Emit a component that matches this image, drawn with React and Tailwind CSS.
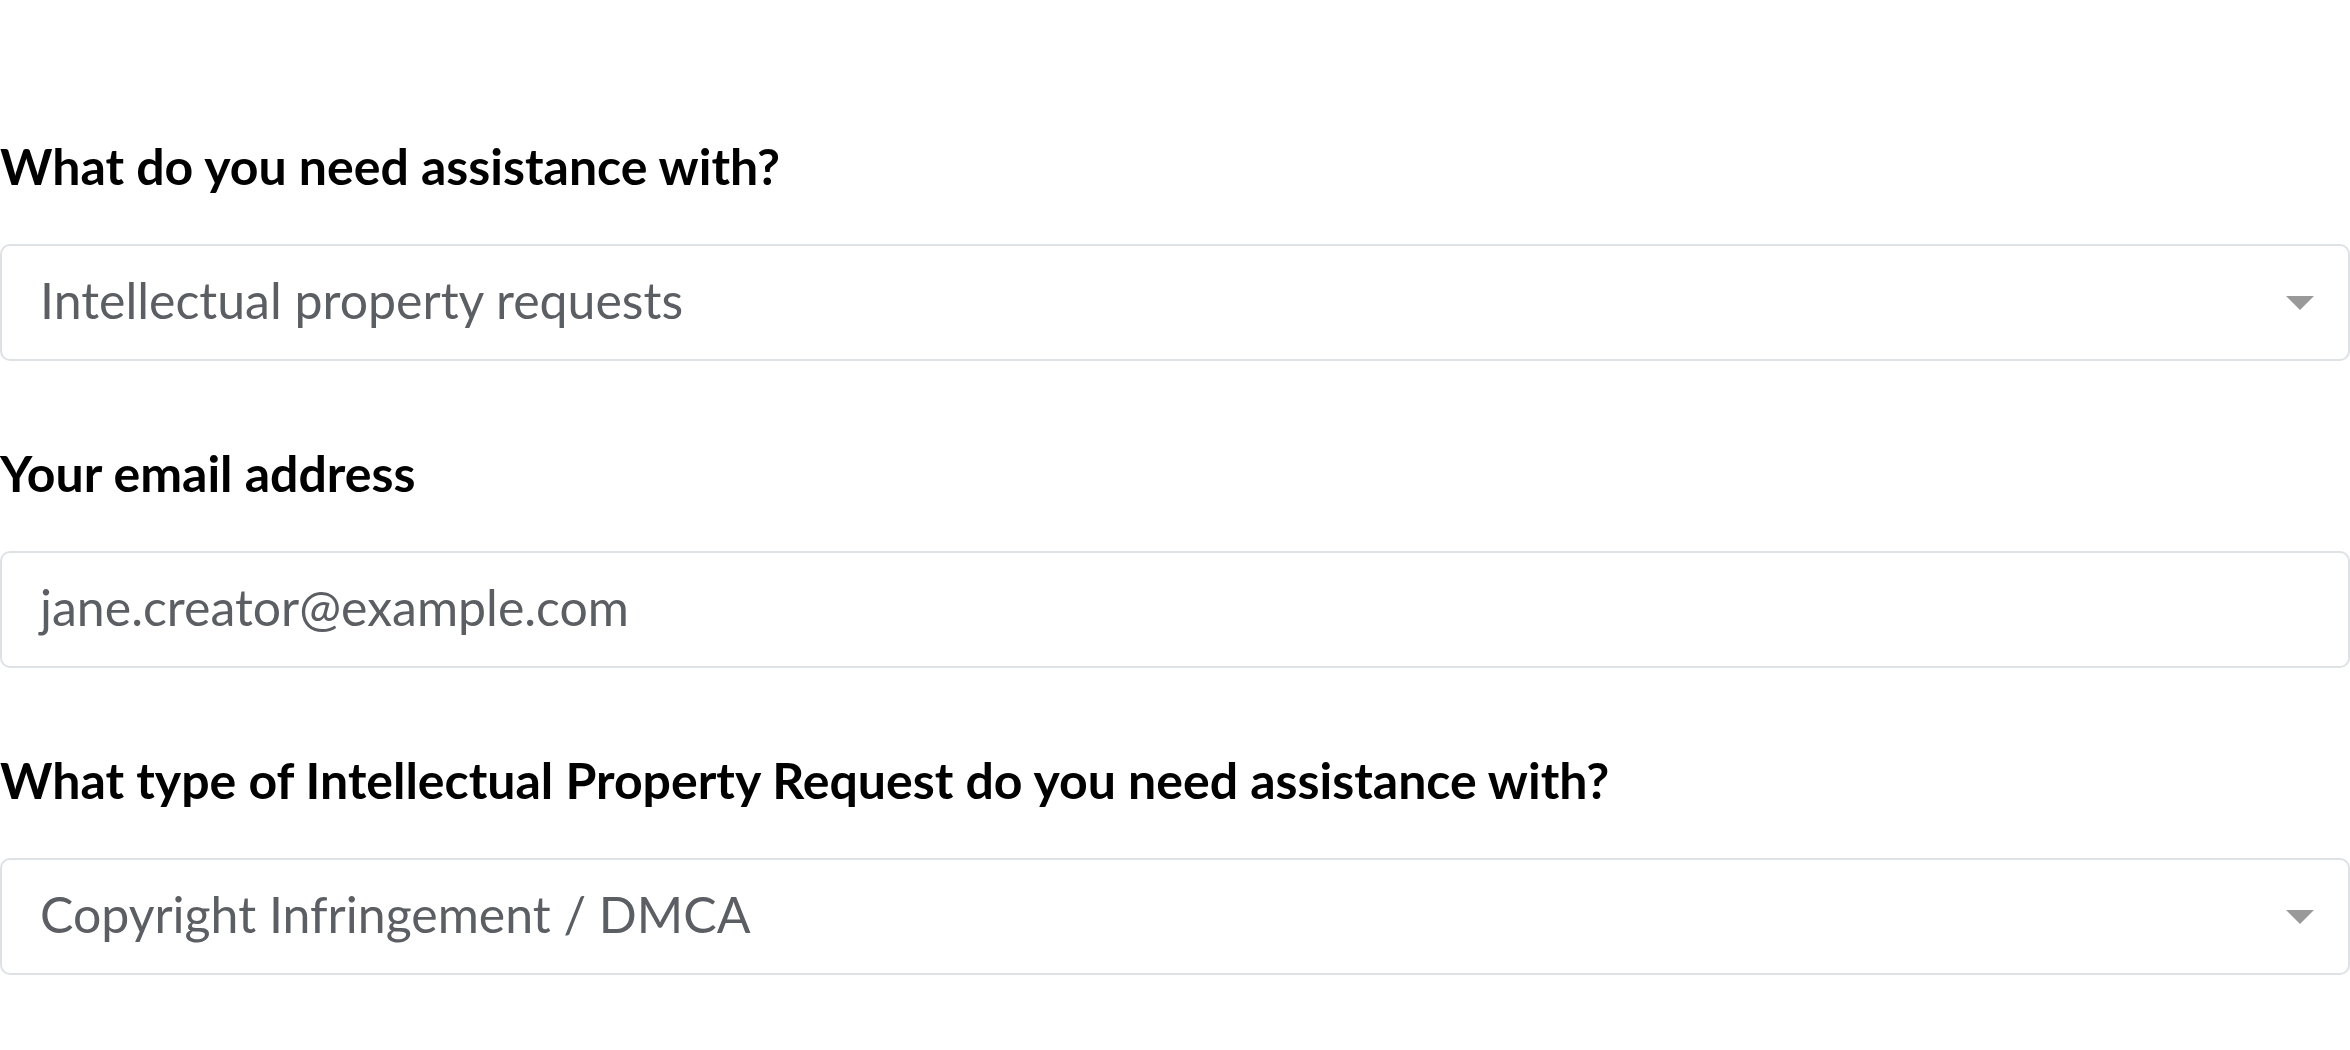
import React from "react";

function Caret() {
  return (
    <svg width="28" height="14" viewBox="0 0 28 14" className="shrink-0">
      <polygon points="0,0 28,0 14,14" fill="#999999" />
    </svg>
  );
}

function Field({ label, value, select }) {
  return (
    <div className="flex flex-col">
      <div className="h-[60px] flex items-center text-[50px] font-bold leading-none text-black tracking-[0px]">
        {label}
      </div>
      <div className="mt-[48px] h-[117px] w-full rounded-[10px] border-2 border-[#dfe2e5] bg-white flex items-center justify-between pl-[38px] pr-[34px]">
        <span className="text-[50px] leading-none text-[#5b5e62] pb-[5px]">{value}</span>
        {select ? <Caret /> : null}
      </div>
    </div>
  );
}

export default function App() {
  return (
    <div
      className="w-[2350px] h-[1050px] bg-white pt-[136px] flex flex-col gap-[82px]"
      style={{ fontFamily: "Lato, 'Noto Sans', sans-serif" }}
    >
      <Field label="What do you need assistance with?" value="Intellectual property requests" select />
      <Field label="Your email address" value="jane.creator@example.com" />
      <Field
        label="What type of Intellectual Property Request do you need assistance with?"
        value="Copyright Infringement / DMCA"
        select
      />
    </div>
  );
}
